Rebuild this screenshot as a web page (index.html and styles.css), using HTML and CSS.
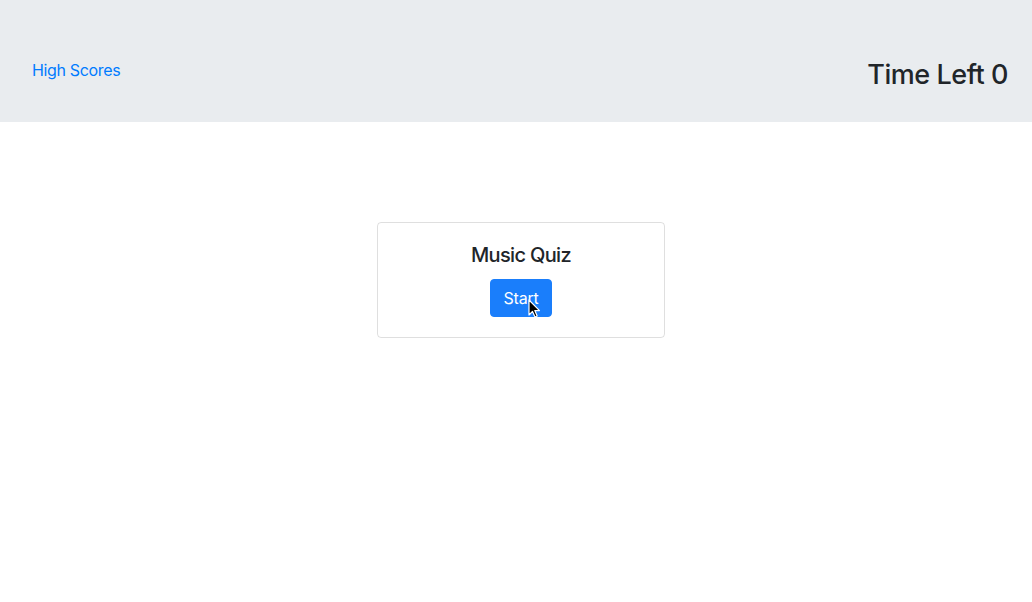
FILE: index.html
```html
<!DOCTYPE html>
<html lang="en">
<head>
<meta charset="utf-8">
<title>Music Quiz</title>
<link rel="stylesheet" href="styles.css">
</head>
<body>
<header class="topbar">
  <a class="scores-link" href="#">High Scores</a>
  <h3 class="timer">Time Left <span>0</span></h3>
</header>
<main class="stage">
  <div class="card">
    <h5 class="card-title">Music Quiz</h5>
    <button class="btn-start">Start
      <svg class="cursor" width="13" height="19" viewBox="0 0 13 19"><path d="M1 1 L1 16 L4.5 12.5 L7 18 L9.2 17 L6.8 11.6 L11.5 11.6 Z" fill="#000" stroke="#fff" stroke-width="1.2" stroke-linejoin="round"/></svg>
    </button>
  </div>
</main>
</body>
</html>
```
FILE: styles.css
```css
* { box-sizing: border-box; }
html, body { margin: 0; padding: 0; }
body {
  font-family: Inter, "Noto Sans", "Liberation Sans", sans-serif;
  color: #212529;
  background: #fff;
  width: 1032px;
  height: 602px;
  overflow: hidden;
}
.topbar {
  height: 122px;
  background: #e9ecef;
  display: flex;
  justify-content: space-between;
  align-items: flex-start;
  padding: 58px 24px 0 32px;
}
.scores-link {
  color: #007bff;
  text-decoration: none;
  font-size: 16px;
  line-height: 24px;
  letter-spacing: -0.35px;
}
.timer {
  margin: 0;
  font-size: 27px;
  font-weight: 500;
  line-height: 34px;
  letter-spacing: -0.45px;
}
.stage {
  display: flex;
  justify-content: center;
  padding: 100px 0 0 10px;
}
.card {
  width: 288px;
  border: 1px solid rgba(0,0,0,0.125);
  border-radius: 4px;
  padding: 20px;
  display: flex;
  flex-direction: column;
  align-items: center;
}
.card-title {
  margin: 0 0 12px;
  font-size: 20px;
  font-weight: 500;
  line-height: 24px;
  letter-spacing: -0.65px;
}
.btn-start {
  position: relative;
  font-family: inherit;
  font-size: 16px;
  line-height: 24px;
  letter-spacing: -0.2px;
  color: #fff;
  background: #1a7efb;
  border: 1px solid #1a7efb;
  border-radius: 4px;
  padding: 6px 12px;
  height: 38px;
}
.cursor {
  position: absolute;
  left: 37px;
  top: 19px;
}
```
